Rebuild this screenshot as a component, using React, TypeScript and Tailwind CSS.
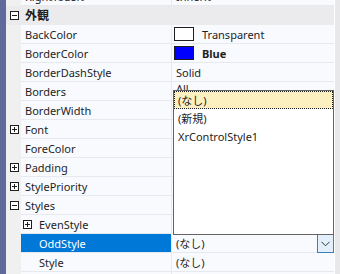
import React from "react";

const FONT = { fontFamily: '"Noto Sans", "Noto Sans CJK JP", sans-serif' };

function Box({ plus }: { plus: boolean }) {
  return (
    <svg width="9" height="9" viewBox="0 0 9 9" className="block">
      <rect x="0.5" y="0.5" width="8" height="8" fill="white" stroke="#1e1e1e" />
      <line x1="2" y1="4.5" x2="7" y2="4.5" stroke="#1e1e1e" />
      {plus && <line x1="4.5" y1="2" x2="4.5" y2="7" stroke="#1e1e1e" />}
    </svg>
  );
}

type RowProps = {
  name: string;
  value?: React.ReactNode;
  expander?: "plus" | "minus";
  nested?: boolean;
  nestedExpander?: "plus" | "minus";
  selected?: boolean;
  dropdown?: boolean;
};

function Row({ name, value, expander, nested, nestedExpander, selected, dropdown }: RowProps) {
  return (
    <div className="flex h-[19px] shrink-0">
      <div className="w-[15px] bg-[#f0f0f0] flex items-center justify-center pl-[1px]">
        {expander && <Box plus={expander === "plus"} />}
      </div>
      <div className="flex-1 flex border-b border-[#e6e9f0] bg-[#f8fafe]">
        <div
          className={`w-[151px] flex items-center border-r border-[#e6e9f0] ${
            nested ? "" : "pl-[4px]"
          } ${selected ? "bg-[#0078d7] text-white" : "text-[#1e1e1e]"}`}
        >
          {nested && (
            <div className="w-[18px] flex items-center justify-start pl-[2px]">
              {nestedExpander && <Box plus={nestedExpander === "plus"} />}
            </div>
          )}
          <span>{name}</span>
        </div>
        <div className="flex-1 relative flex items-center text-[#1e1e1e]">
          {value}
          {dropdown && (
            <div className="absolute right-0 top-0 w-[17px] h-[19px] border border-[#3d7fbe] bg-[#e3effa] flex items-center justify-center">
              <svg width="9" height="6" viewBox="0 0 9 6">
                <polyline points="0.5,0.8 4.5,4.8 8.5,0.8" fill="none" stroke="#333" strokeWidth="1" />
              </svg>
            </div>
          )}
        </div>
      </div>
    </div>
  );
}

function Swatch({ color }: { color: string }) {
  return <div className="ml-[2px] w-[20px] h-[14px] border border-[#1e1e1e]" style={{ background: color }} />;
}

export default function App() {
  return (
    <div className="w-[340px] h-[274px] overflow-hidden flex text-[11px] leading-none bg-white" style={FONT}>
      <div className="w-[6px] bg-[#5e6a9a]" />
      <div className="flex-1 flex flex-col relative">
        <div className="mt-[-13px] shrink-0">
          <Row name="RightToLeft" value={<span className="pl-[4px]">Inherit</span>} />
        </div>
        <div className="flex h-[19px] shrink-0 bg-[#ebebee] items-center">
          <div className="w-[15px] flex items-center justify-center pl-[1px]">
            <Box plus={false} />
          </div>
          <span className="pl-[4px] font-bold text-[12px] text-[#1e1e1e]">外観</span>
        </div>
        <Row
          name="BackColor"
          value={
            <div className="flex items-center">
              <Swatch color="#ffffff" />
              <span className="pl-[8px]">Transparent</span>
            </div>
          }
        />
        <Row
          name="BorderColor"
          value={
            <div className="flex items-center">
              <Swatch color="#0000ff" />
              <span className="pl-[8px] font-bold">Blue</span>
            </div>
          }
        />
        <Row name="BorderDashStyle" value={<span className="pl-[4px]">Solid</span>} />
        <Row name="Borders" value={<span className="pl-[4px] relative top-[-3px]">All</span>} />
        <Row name="BorderWidth" />
        <Row name="Font" expander="plus" />
        <Row name="ForeColor" />
        <Row name="Padding" expander="plus" />
        <Row name="StylePriority" expander="plus" />
        <Row name="Styles" expander="minus" />
        <Row name="EvenStyle" nested nestedExpander="plus" />
        <Row name="OddStyle" nested selected dropdown value={<span className="pl-[4px]">(なし)</span>} />
        <Row name="Style" nested value={<span className="pl-[4px]">(なし)</span>} />
        <Row name="" />

        <div className="absolute left-[167px] top-[90px] w-[161px] h-[145px] border border-[#646464] bg-white text-[#1e1e1e] flex flex-col">
          <div className="h-[18px] bg-[#fdf0c0] border border-dotted border-[#1e1e1e] flex items-center pl-[3px]">(なし)</div>
          <div className="h-[18px] flex items-center pl-[4px]">(新規)</div>
          <div className="h-[18px] flex items-center pl-[4px]">XrControlStyle1</div>
        </div>
      </div>
      <div className="w-[6px] bg-[#e8e8ea] border-l border-white" />
    </div>
  );
}
